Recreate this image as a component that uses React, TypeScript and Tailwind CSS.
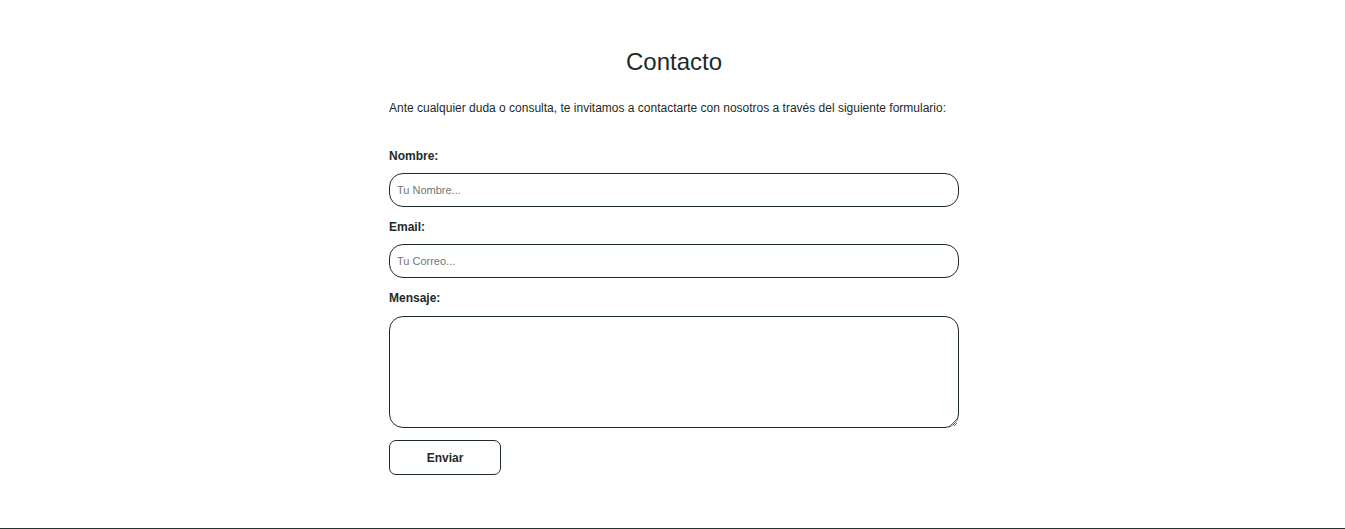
import React from "react";

export default function App() {
  const font = { fontFamily: '"Liberation Sans", Arial, sans-serif' };
  return (
    <div className="bg-white text-[#1d2b28]" style={font}>
      <main className="h-[528px] flex justify-center">
        <form className="w-[570px] ml-[3px] flex flex-col pt-[48px]" onSubmit={(e) => e.preventDefault()}>
          <h1 className="text-[24px] leading-[28px] text-center font-normal">Contacto</h1>
          <p className="text-[12px] leading-[14px] mt-[25px]">
            Ante cualquier duda o consulta, te invitamos a contactarte con nosotros a través del siguiente formulario:
          </p>
          <label className="text-[12px] leading-[14px] font-bold mt-[34px] mb-[10px]">Nombre:</label>
          <input
            type="text"
            placeholder="Tu Nombre..."
            className="h-[34px] border border-[#1d2b28] rounded-[14px] px-[7px] text-[11px] placeholder:text-[#757575] outline-none"
          />
          <label className="text-[12px] leading-[14px] font-bold mt-[13px] mb-[10px]">Email:</label>
          <input
            type="email"
            placeholder="Tu Correo..."
            className="h-[34px] border border-[#1d2b28] rounded-[14px] px-[7px] text-[11px] placeholder:text-[#757575] outline-none"
          />
          <label className="text-[12px] leading-[14px] font-bold mt-[13px] mb-[11px]">Mensaje:</label>
          <textarea className="h-[112px] border border-[#1d2b28] rounded-[14px] p-[7px] text-[11px] outline-none resize-y" />
          <button
            type="submit"
            className="mt-[12px] w-[112px] h-[35px] border border-[#1d2b28] rounded-[7px] text-[12px] font-bold bg-white"
          >
            Enviar
          </button>
        </form>
      </main>
      <div className="h-[1px] bg-[#1d3530]" />
    </div>
  );
}
